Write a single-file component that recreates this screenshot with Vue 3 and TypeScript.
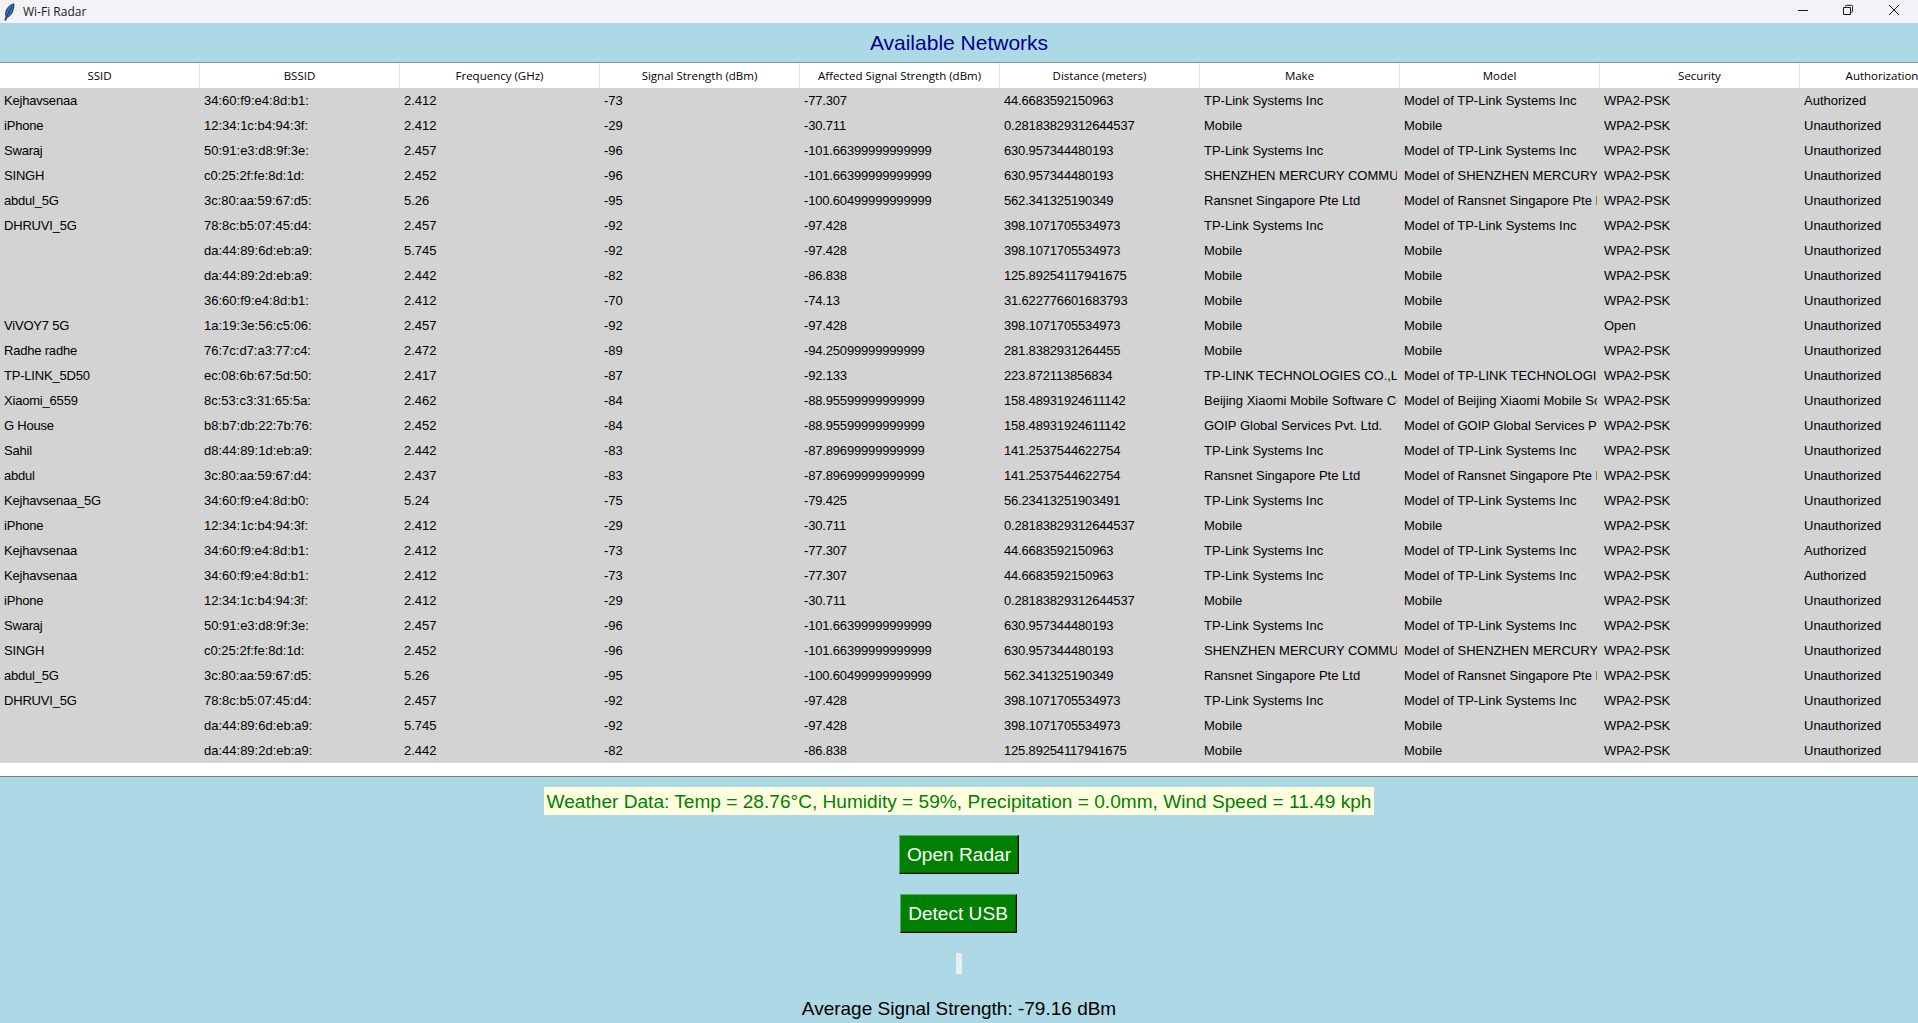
<script setup lang="ts">
const columns: string[] = ['SSID', 'BSSID', 'Frequency (GHz)', 'Signal Strength (dBm)', 'Affected Signal Strength (dBm)', 'Distance (meters)', 'Make', 'Model', 'Security', 'Authorization']

const tp = 'TP-Link Systems Inc'
const mtp = 'Model of TP-Link Systems Inc'
const ran = 'Ransnet Singapore Pte Ltd'
const mran = 'Model of Ransnet Singapore Pte Ltd'
const sz = 'SHENZHEN MERCURY COMMUNICATION'
const msz = 'Model of SHENZHEN MERCURY COMMUNICATION'
const wpa = 'WPA2-PSK'
const un = 'Unauthorized'
const au = 'Authorized'

const kej = ['Kejhavsenaa', '34:60:f9:e4:8d:b1:', '2.412', '-73', '-77.307', '44.6683592150963', tp, mtp, wpa, au]
const iph = ['iPhone', '12:34:1c:b4:94:3f:', '2.412', '-29', '-30.711', '0.28183829312644537', 'Mobile', 'Mobile', wpa, un]
const swa = ['Swaraj', '50:91:e3:d8:9f:3e:', '2.457', '-96', '-101.66399999999999', '630.957344480193', tp, mtp, wpa, un]
const sin = ['SINGH', 'c0:25:2f:fe:8d:1d:', '2.452', '-96', '-101.66399999999999', '630.957344480193', sz, msz, wpa, un]
const abd = ['abdul_5G', '3c:80:aa:59:67:d5:', '5.26', '-95', '-100.60499999999999', '562.341325190349', ran, mran, wpa, un]
const dhr = ['DHRUVI_5G', '78:8c:b5:07:45:d4:', '2.457', '-92', '-97.428', '398.1071705534973', tp, mtp, wpa, un]
const da1 = ['', 'da:44:89:6d:eb:a9:', '5.745', '-92', '-97.428', '398.1071705534973', 'Mobile', 'Mobile', wpa, un]
const da2 = ['', 'da:44:89:2d:eb:a9:', '2.442', '-82', '-86.838', '125.89254117941675', 'Mobile', 'Mobile', wpa, un]

const rows: string[][] = [
  kej, iph, swa, sin, abd, dhr, da1, da2,
  ['', '36:60:f9:e4:8d:b1:', '2.412', '-70', '-74.13', '31.622776601683793', 'Mobile', 'Mobile', wpa, un],
  ['ViVOY7 5G', '1a:19:3e:56:c5:06:', '2.457', '-92', '-97.428', '398.1071705534973', 'Mobile', 'Mobile', 'Open', un],
  ['Radhe radhe', '76:7c:d7:a3:77:c4:', '2.472', '-89', '-94.25099999999999', '281.8382931264455', 'Mobile', 'Mobile', wpa, un],
  ['TP-LINK_5D50', 'ec:08:6b:67:5d:50:', '2.417', '-87', '-92.133', '223.872113856834', 'TP-LINK TECHNOLOGIES CO.,LTD.', 'Model of TP-LINK TECHNOLOGIES CO.,LTD.', wpa, un],
  ['Xiaomi_6559', '8c:53:c3:31:65:5a:', '2.462', '-84', '-88.95599999999999', '158.48931924611142', 'Beijing Xiaomi Mobile Software Co., Ltd', 'Model of Beijing Xiaomi Mobile Software Co., Ltd', wpa, un],
  ['G House', 'b8:b7:db:22:7b:76:', '2.452', '-84', '-88.95599999999999', '158.48931924611142', 'GOIP Global Services Pvt. Ltd.', 'Model of GOIP Global Services Pvt. Ltd.', wpa, un],
  ['Sahil', 'd8:44:89:1d:eb:a9:', '2.442', '-83', '-87.89699999999999', '141.2537544622754', tp, mtp, wpa, un],
  ['abdul', '3c:80:aa:59:67:d4:', '2.437', '-83', '-87.89699999999999', '141.2537544622754', ran, mran, wpa, un],
  ['Kejhavsenaa_5G', '34:60:f9:e4:8d:b0:', '5.24', '-75', '-79.425', '56.23413251903491', tp, mtp, wpa, un],
  iph, kej, kej, iph, swa, sin, abd, dhr, da1, da2,
]
</script>

<template>
  <div class="window">
    <header class="titlebar">
      <svg class="feather" width="12" height="18" viewBox="0 0 12 18">
        <path d="M11 .8C7.6 1.4 4.2 4.2 3 8.2 2.4 10.4 2.4 12.4 3 13.8L1.8 17l.9.4 1.2-3C6.4 14 8.8 11.2 10 7.4 10.8 5 11.1 2.8 11 .8Z" fill="#2f73bd" stroke="#16263c" stroke-width="0.8" />
        <path d="M9.6 3C7.6 6 5.4 9.6 3.8 13.6" fill="none" stroke="#10233b" stroke-width="0.7" />
      </svg>
      <span class="app-name">Wi-Fi Radar</span>
      <div class="controls">
        <svg width="46" height="23" viewBox="0 0 46 23"><path d="M18 10.5h10" stroke="#1a1a1a" stroke-width="1" fill="none" /></svg>
        <svg width="46" height="23" viewBox="0 0 46 23"><path d="M17.5 7.5h7v7h-7zM19.5 7.5v-1.2a1 1 0 0 1 1-1h5a1 1 0 0 1 1 1v5a1 1 0 0 1-1 1h-1" stroke="#1a1a1a" stroke-width="1" fill="none" /></svg>
        <svg width="46" height="23" viewBox="0 0 46 23"><path d="M17 5l10 10M27 5L17 15" stroke="#1a1a1a" stroke-width="1" fill="none" /></svg>
      </div>
    </header>

    <h1 class="title">Available Networks</h1>

    <section class="table">
      <div class="row head">
        <div v-for="c in columns" :key="c" class="hcell">{{ c }}</div>
      </div>
      <div v-for="(r, i) in rows" :key="i" class="row body-row">
        <div v-for="(v, j) in r" :key="j" class="cell">{{ v }}</div>
      </div>
    </section>

    <footer class="panel">
      <div class="weather">Weather Data: Temp = 28.76°C, Humidity = 59%, Precipitation = 0.0mm, Wind Speed = 11.49 kph</div>
      <button class="btn radar">Open Radar</button>
      <button class="btn usb">Detect USB</button>
      <div class="meter"></div>
      <div class="avg">Average Signal Strength: -79.16 dBm</div>
    </footer>
  </div>
</template>

<style>
html, body { margin: 0; overflow: hidden; background: #fff; }
</style>

<style scoped>
.window {
  width: 1918px;
  height: 1023px;
  display: flex;
  flex-direction: column;
  overflow: hidden;
  font-family: "Liberation Sans", Arial, sans-serif;
}
.titlebar {
  height: 23px;
  flex: none;
  display: flex;
  align-items: center;
  background: #f3f3f7;
  padding-left: 3px;
}
.feather { margin-right: 8px; }
.app-name { font-family: "Open Sans", sans-serif; font-size: 12px; color: #1a1a1a; }
.controls { margin-left: auto; display: flex; }
.title {
  height: 40px;
  flex: none;
  margin: 0;
  box-sizing: border-box;
  background: #add8e6;
  color: #00008b;
  font-size: 21px;
  font-weight: 400;
  line-height: 40px;
  text-align: center;
  border-bottom: 1px solid #7f9299;
}
.table {
  height: 714px;
  flex: none;
  background: #fff;
  overflow: hidden;
  border-bottom: 1px solid #808080;
  box-sizing: border-box;
}
.row { display: flex; width: 2000px; }
.head { height: 25px; background: #fff; }
.hcell {
  width: 200px;
  flex: none;
  box-sizing: border-box;
  font-family: "Open Sans", sans-serif;
  font-size: 11.5px;
  line-height: 25px;
  text-align: center;
  color: #000;
  border-right: 1px solid #e5e5e5;
}
.hcell:last-child { width: 164px; border-right: 0; }
.body-row { height: 25px; background: #d3d3d3; }
.cell {
  width: 197px;
  height: 25px;
  flex: none;
  box-sizing: border-box;
  margin-right: 3px;
  padding-left: 4px;
  font-size: 13px;
  line-height: 25px;
  color: #000;
  white-space: nowrap;
  overflow: hidden;
}
.cell:first-child { letter-spacing: -0.2px; }
.cell:nth-child(5), .cell:nth-child(6) { letter-spacing: -0.17px; }
.panel {
  flex: 1;
  background: #add8e6;
  display: flex;
  flex-direction: column;
  align-items: center;
  min-height: 0;
}
.weather {
  margin-top: 10px;
  height: 28px;
  line-height: 29px;
  padding: 0 3px;
  background: #ffffe0;
  color: #008000;
  font-size: 19.1px;
  white-space: nowrap;
}
.btn {
  display: block;
  height: 39px;
  box-sizing: border-box;
  margin: 0;
  padding: 0;
  background: #008000;
  color: #fff;
  font-family: inherit;
  font-size: 19.1px;
  white-space: nowrap;
  border-style: solid;
  border-width: 1px;
  border-color: #5cae5c #000 #000 #5cae5c;
  border-radius: 0;
  box-shadow: inset -1px -1px 0 #006400;
}
.radar { margin-top: 20px; width: 120px; }
.usb { margin-top: 20px; margin-right: 2px; width: 117px; }
.meter {
  margin-top: 20px;
  width: 6px;
  height: 21px;
  background: #e9eef0;
}
.avg {
  margin-top: 23px;
  font-size: 19px;
  line-height: 24px;
  color: #000;
}
</style>
